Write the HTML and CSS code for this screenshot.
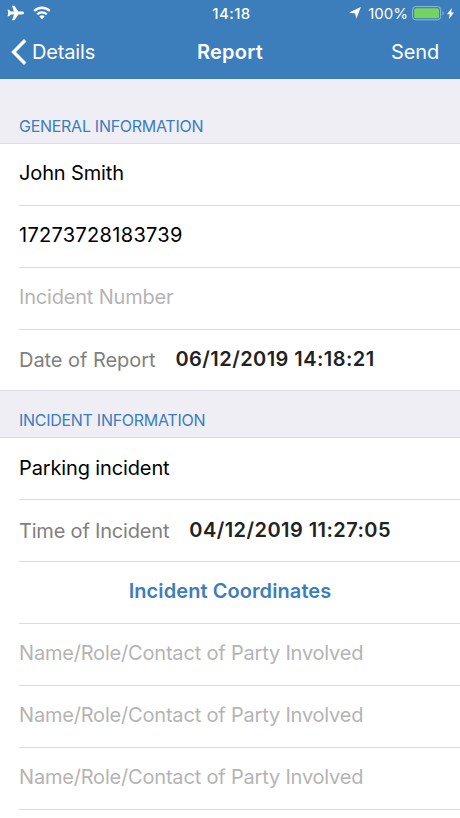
FILE: index.html
```html
<!DOCTYPE html>
<html lang="en">
<head>
  <meta charset="UTF-8" />
  <meta name="viewport" content="width=device-width, initial-scale=1.0"/>
  <title>Report</title>
  <link rel="stylesheet" href="styles.css">
</head>
<body>

  <header class="header">
    <!-- Status bar -->
    <div class="status-bar">
      <div class="status-left">
        <svg class="plane" width="18" height="16" viewBox="0 0 18 16" fill="#fff">
          <path d="M17 8c0 .9-.8 1.400-2 1.400h-3.600L7.400 15.200H5l2-5.800H3.600L2.200 11.200H.5L1.300 8 .5 4.800h1.700l1.400 1.800H7L5 .8h2.400l4 5.800H15c1.200 0 2 .5 2 1.400z"/>
        </svg>
        <svg width="18" height="14" viewBox="0 0 18 14" fill="none" stroke="#fff" stroke-width="2.300">
          <path d="M1.200 5a11 11 0 0 1 15.600 0"/>
          <path d="M4.200 8.300a6.800 6.800 0 0 1 9.600 0"/>
          <path d="M9 13.200l-2.600-2.700a3.700 3.700 0 0 1 5.200 0z" fill="#fff" stroke="none"/>
        </svg>
      </div>
      <span class="clock">14:18</span>
      <div class="status-right">
        <svg class="location" width="12" height="12" viewBox="0 0 12 12" fill="#fff">
          <path d="M11.900.1L7.300 11.800 6.200 6.400.1 5.400z"/>
        </svg>
        <span class="percent">100%</span>
        <svg class="battery" width="33" height="15" viewBox="0 0 33 15">
          <rect x=".6" y=".6" width="28" height="13.200" rx="3" fill="none" stroke="#8dbbe0" stroke-width="1"/>
          <rect x="2.200" y="2.200" width="24.800" height="10" rx="1.500" fill="#75d45f"/>
          <path d="M30.500 5c1.600.8 1.600 3.600 0 4.400z" fill="#8dbbe0"/>
        </svg>
        <svg class="bolt" width="7" height="11" viewBox="0 0 7 11" fill="#fff">
          <path d="M4.800 0L0 6.300h2.700L2 11l5-6.500H4.200z"/>
        </svg>
      </div>
    </div>

    <!-- Navigation bar -->
    <nav class="nav-bar">
      <a class="back">
        <svg width="16" height="26" viewBox="0 0 16 26" fill="none" stroke="#fff" stroke-width="3.400">
          <path d="M14.200 1.300L2.600 13l11.600 11.700"/>
        </svg>
        <span class="nav-text">Details</span>
      </a>
      <span class="title">Report</span>
      <a class="nav-text send">Send</a>
    </nav>
  </header>

  <main>
    <h2 class="section-title first">GENERAL INFORMATION</h2>
    <div class="section">
      <div class="row"><span class="value">John Smith</span></div>
      <div class="row"><span class="value number">17273728183739</span></div>
      <div class="row"><span class="placeholder">Incident Number</span></div>
      <div class="row">
        <span class="label">Date of Report</span>
        <span class="date">06/12/2019 14:18:21</span>
      </div>
    </div>

    <h2 class="section-title second">INCIDENT INFORMATION</h2>
    <div class="section">
      <div class="row"><span class="value">Parking incident</span></div>
      <div class="row">
        <span class="label time">Time of Incident</span>
        <span class="date">04/12/2019 11:27:05</span>
      </div>
      <div class="row"><a class="link">Incident Coordinates</a></div>
      <div class="row"><span class="placeholder">Name/Role/Contact of Party Involved</span></div>
      <div class="row"><span class="placeholder">Name/Role/Contact of Party Involved</span></div>
      <div class="row"><span class="placeholder">Name/Role/Contact of Party Involved</span></div>
    </div>
  </main>

</body>
</html>
```
FILE: styles.css
```css
html, body {
  height: 100%;
  margin: 0;
  font-family: Inter, 'Liberation Sans', sans-serif;
  background-color: #fff;
}

.header {
  height: 79px;
  background-color: #3c7dbc;
  color: #fff;
}

.status-bar {
  display: grid;
  grid-template-columns: 1fr auto 1fr;
  align-items: center;
  height: 26px;
  padding: 0 6px;
  font-size: 15px;
}

.status-left, .status-right {
  display: flex;
  align-items: center;
}

.status-left {
  gap: 8px;
  padding-left: 1px;
}

.status-right {
  justify-content: flex-end;
}

.clock {
  padding-left: 3px;
  font-weight: 500;
  letter-spacing: 0.4px;
}

.percent {
  margin: 0 4px 0 7px;
}

.bolt {
  margin-left: 2px;
}

.nav-bar {
  display: grid;
  grid-template-columns: 1fr auto 1fr;
  align-items: center;
  height: 52px;
  padding: 0 21px;
}

.back {
  display: flex;
  align-items: center;
  gap: 5px;
  margin-left: -10px;
}

.nav-text {
  font-size: 20px;
  letter-spacing: -0.15px;
}

.send {
  text-align: right;
}

.title {
  font-size: 20px;
  font-weight: 600;
  letter-spacing: 0.2px;
}

.section-title {
  display: flex;
  align-items: flex-end;
  box-sizing: border-box;
  margin: 0;
  padding: 0 19px 7px;
  border-bottom: 1px solid #dcdce0;
  background-color: #efeef4;
  color: #3c7dbc;
  font-size: 16px;
  font-weight: 400;
  line-height: 19px;
  letter-spacing: -0.28px;
}

.first {
  height: 65px;
}

.second {
  height: 48px;
  border-top: 1px solid #dcdce0;
}

.section {
  padding-left: 19px;
}

.row {
  display: flex;
  align-items: center;
  box-sizing: border-box;
  height: 61.9px;
  padding-bottom: 2px;
  border-bottom: 1px solid #dcdcdf;
  font-size: 20px;
  white-space: nowrap;
}

/* the next section title draws the line here */
.first + .section .row:last-child {
  height: 60.6px;
  padding-bottom: 1px;
  border-bottom: none;
}

.value {
  color: #000;
  letter-spacing: -0.13px;
}

.number {
  letter-spacing: 0.3px;
}

.placeholder {
  color: #b4b4b4;
  letter-spacing: -0.19px;
}

.label {
  margin-right: 20px;
  padding-top: 2px;
  color: #808080;
  letter-spacing: -0.05px;
}

.time {
  letter-spacing: -0.19px;
}

.date {
  color: #222;
  font-weight: 600;
  letter-spacing: 0.44px;
}

.link {
  margin: 0 auto;
  padding-right: 19px;
  color: #3c7dbc;
  font-weight: 600;
  letter-spacing: 0.08px;
}
```
